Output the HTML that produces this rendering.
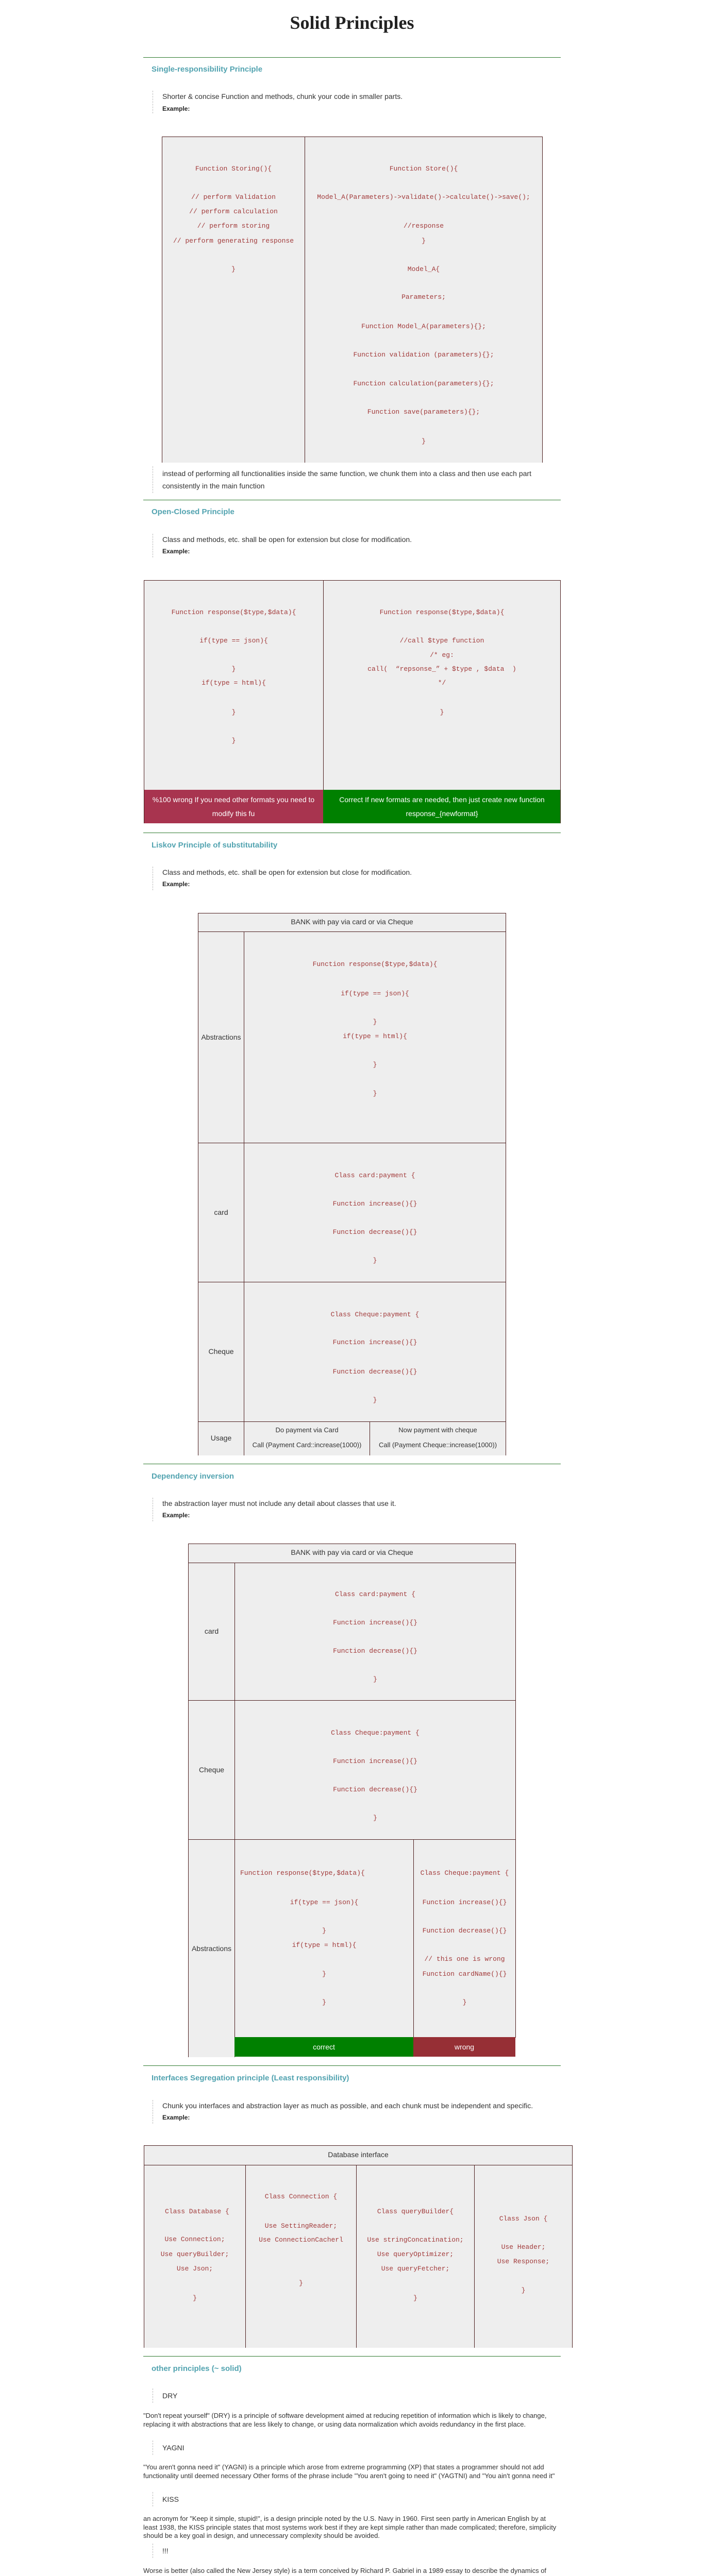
<!DOCTYPE html>
<html style="width:1366px;height:5124px;overflow:hidden;margin:0"><head><meta charset="utf-8"><style>
html{overflow:hidden}
body{margin:0;width:1366px;height:5124px;position:relative;background:#fff;font-family:"Liberation Sans",Arial,sans-serif;overflow:hidden;color:#333}
#wrap{position:absolute;left:0;top:0;width:1366px;height:5124px;overflow:hidden}
.a{position:absolute}
.g{position:absolute;left:278px;width:810px;height:0;border-top:1px solid #2e7a2e}
.h{position:absolute;left:294px;font-size:15px;font-weight:bold;color:#52a3b0;line-height:20px;white-space:nowrap}
.q{position:absolute;left:296px;border-left:1px dashed #bbb;width:1px}
.t{position:absolute;left:315px;font-size:14px;color:#333;line-height:20px;white-space:nowrap}
.ex{position:absolute;left:315px;font-size:12px;font-weight:bold;color:#222;line-height:16px}
.cell{position:absolute;background:#eee;border:1px solid #4d1f1f;box-sizing:border-box}
.k{position:absolute;font-family:"Liberation Mono",monospace;font-size:13px;color:#a23b3b;line-height:28px;height:28px;text-align:center;white-space:pre}
.s{position:absolute;font-size:14px;color:#333;line-height:20px;text-align:center;white-space:nowrap}
.w{position:absolute;font-size:14px;color:#fff;line-height:27px;text-align:center}
.p{position:absolute;left:278px;width:805px;font-size:13px;line-height:16.5px;color:#333}
</style></head><body><div id="wrap">

<div class="a" style="left:0;width:1366px;top:22px;text-align:center;font-family:'Liberation Serif',serif;font-weight:bold;font-size:36px;line-height:44px;color:#222">Solid Principles</div>

<!-- Section 1 -->
<div class="g" style="top:111px"></div>
<div class="h" style="top:125px">Single-responsibility Principle</div>
<div class="q" style="top:176px;height:44px"></div>
<div class="t" style="top:177px">Shorter &amp; concise Function and methods, chunk your code in smaller parts.</div>
<div class="ex" style="top:203px">Example:</div>
<div class="cell" style="left:314px;top:265px;width:278px;height:633px;border-bottom:none"></div>
<div class="cell" style="left:591px;top:265px;width:462px;height:633px;border-bottom:none"></div>
<div class="k" style="left:314px;width:278px;top:314px">Function Storing(){</div>
<div class="k" style="left:314px;width:278px;top:369px">// perform Validation</div>
<div class="k" style="left:314px;width:278px;top:397px">// perform calculation</div>
<div class="k" style="left:314px;width:278px;top:425px">// perform storing</div>
<div class="k" style="left:314px;width:278px;top:454px">// perform generating response</div>
<div class="k" style="left:314px;width:278px;top:509px">}</div>
<div class="k" style="left:591px;width:462px;top:314px">Function Store(){</div>
<div class="k" style="left:591px;width:462px;top:369px">Model_A(Parameters)-&gt;validate()-&gt;calculate()-&gt;save();</div>
<div class="k" style="left:591px;width:462px;top:425px">//response</div>
<div class="k" style="left:591px;width:462px;top:454px">}</div>
<div class="k" style="left:591px;width:462px;top:509px">Model_A{</div>
<div class="k" style="left:591px;width:462px;top:563px">Parameters;</div>
<div class="k" style="left:591px;width:462px;top:620px">Function Model_A(parameters){};</div>
<div class="k" style="left:591px;width:462px;top:675px">Function validation (parameters){};</div>
<div class="k" style="left:591px;width:462px;top:731px">Function calculation(parameters){};</div>
<div class="k" style="left:591px;width:462px;top:786px">Function save(parameters){};</div>
<div class="k" style="left:591px;width:462px;top:843px">}</div>
<div class="q" style="top:905px;height:52px"></div>
<div class="t" style="top:907px;line-height:24px;white-space:normal;width:740px">instead of performing all functionalities inside the same function, we chunk them into a class and then use each part consistently in the main function</div>

<!-- Section 2 -->
<div class="g" style="top:970px"></div>
<div class="h" style="top:984px">Open-Closed Principle</div>
<div class="q" style="top:1036px;height:46px"></div>
<div class="t" style="top:1037px">Class and methods, etc. shall be open for extension but close for modification.</div>
<div class="ex" style="top:1062px">Example:</div>
<div class="cell" style="left:279px;top:1126px;width:349px;height:408px"></div>
<div class="cell" style="left:627px;top:1126px;width:461px;height:408px"></div>
<div class="k" style="left:279px;width:349px;top:1175px">Function response($type,$data){</div>
<div class="k" style="left:279px;width:349px;top:1230px">if(type == json){</div>
<div class="k" style="left:279px;width:349px;top:1285px">}</div>
<div class="k" style="left:279px;width:349px;top:1312px">if(type = html){</div>
<div class="k" style="left:279px;width:349px;top:1369px">}</div>
<div class="k" style="left:279px;width:349px;top:1424px">}</div>
<div class="k" style="left:627px;width:461px;top:1175px">Function response($type,$data){</div>
<div class="k" style="left:627px;width:461px;top:1230px">//call $type function</div>
<div class="k" style="left:627px;width:461px;top:1258px">/* eg:</div>
<div class="k" style="left:627px;width:461px;top:1285px">call(  “repsonse_” + $type , $data  )</div>
<div class="k" style="left:627px;width:461px;top:1312px">*/</div>
<div class="k" style="left:627px;width:461px;top:1369px">}</div>
<div class="a" style="left:279px;top:1533px;width:348px;height:65px;background:#a8344f;border-left:1px solid #4d1f1f;box-sizing:border-box"></div>
<div class="a" style="left:627px;top:1533px;width:461px;height:65px;background:#008000;border-right:1px solid #4d1f1f;box-sizing:border-box"></div>
<div class="w" style="left:279px;width:348px;top:1539px">%100 wrong If you need other formats you need to modify this fu</div>
<div class="w" style="left:627px;width:461px;top:1539px">Correct If new formats are needed, then just create new function response_{newformat}</div>

<!-- Section 3 -->
<div class="g" style="top:1616px"></div>
<div class="h" style="top:1631px">Liskov Principle of substitutability</div>
<div class="q" style="top:1682px;height:46px"></div>
<div class="t" style="top:1683px">Class and methods, etc. shall be open for extension but close for modification.</div>
<div class="ex" style="top:1708px">Example:</div>
<div class="cell" style="left:384px;top:1772px;width:598px;height:37px"></div>
<div class="s" style="left:384px;width:598px;top:1779px">BANK with pay via card or via Cheque</div>
<div class="cell" style="left:384px;top:1808px;width:90px;height:411px"></div>
<div class="cell" style="left:473px;top:1808px;width:509px;height:411px"></div>
<div class="cell" style="left:384px;top:2218px;width:90px;height:271px"></div>
<div class="cell" style="left:473px;top:2218px;width:509px;height:271px"></div>
<div class="cell" style="left:384px;top:2488px;width:90px;height:272px"></div>
<div class="cell" style="left:473px;top:2488px;width:509px;height:272px"></div>
<div class="cell" style="left:384px;top:2759px;width:90px;height:66px;border-bottom:none"></div>
<div class="cell" style="left:473px;top:2759px;width:245px;height:66px;border-bottom:none"></div>
<div class="cell" style="left:717px;top:2759px;width:265px;height:66px;border-bottom:none"></div>
<div class="s" style="left:384px;width:90px;top:2003px">Abstractions</div>
<div class="s" style="left:384px;width:90px;top:2343px">card</div>
<div class="s" style="left:384px;width:90px;top:2613px">Cheque</div>
<div class="s" style="left:384px;width:90px;top:2781px">Usage</div>
<div class="k" style="left:473px;width:509px;top:1858px">Function response($type,$data){</div>
<div class="k" style="left:473px;width:509px;top:1915px">if(type == json){</div>
<div class="k" style="left:473px;width:509px;top:1970px">}</div>
<div class="k" style="left:473px;width:509px;top:1998px">if(type = html){</div>
<div class="k" style="left:473px;width:509px;top:2053px">}</div>
<div class="k" style="left:473px;width:509px;top:2109px">}</div>
<div class="k" style="left:473px;width:509px;top:2268px">Class card:payment {</div>
<div class="k" style="left:473px;width:509px;top:2323px">Function increase(){}</div>
<div class="k" style="left:473px;width:509px;top:2378px">Function decrease(){}</div>
<div class="k" style="left:473px;width:509px;top:2433px">}</div>
<div class="k" style="left:473px;width:509px;top:2538px">Class Cheque:payment {</div>
<div class="k" style="left:473px;width:509px;top:2592px">Function increase(){}</div>
<div class="k" style="left:473px;width:509px;top:2649px">Function decrease(){}</div>
<div class="k" style="left:473px;width:509px;top:2704px">}</div>
<div class="s" style="left:473px;width:245px;top:2766px;font-size:13px">Do payment via Card</div>
<div class="s" style="left:473px;width:245px;top:2795px;font-size:13px">Call (Payment Card::increase(1000))</div>
<div class="s" style="left:717px;width:265px;top:2766px;font-size:13px">Now payment with cheque</div>
<div class="s" style="left:717px;width:265px;top:2795px;font-size:13px">Call (Payment Cheque::increase(1000))</div>

<!-- Section 4 -->
<div class="g" style="top:2841px"></div>
<div class="h" style="top:2856px">Dependency inversion</div>
<div class="q" style="top:2907px;height:46px"></div>
<div class="t" style="top:2908px">the abstraction layer must not include any detail about classes that use it.</div>
<div class="ex" style="top:2933px">Example:</div>
<div class="cell" style="left:365px;top:2996px;width:636px;height:38px"></div>
<div class="s" style="left:365px;width:636px;top:3003px">BANK with pay via card or via Cheque</div>
<div class="cell" style="left:365px;top:3033px;width:91px;height:268px"></div>
<div class="cell" style="left:455px;top:3033px;width:546px;height:268px"></div>
<div class="cell" style="left:365px;top:3300px;width:91px;height:271px"></div>
<div class="cell" style="left:455px;top:3300px;width:546px;height:271px"></div>
<div class="cell" style="left:365px;top:3570px;width:91px;height:423px;border-bottom:none"></div>
<div class="cell" style="left:455px;top:3570px;width:348px;height:385px"></div>
<div class="cell" style="left:802px;top:3570px;width:199px;height:385px"></div>
<div class="s" style="left:365px;width:91px;top:3156px">card</div>
<div class="s" style="left:365px;width:91px;top:3425px">Cheque</div>
<div class="s" style="left:365px;width:91px;top:3772px">Abstractions</div>
<div class="k" style="left:455px;width:546px;top:3081px">Class card:payment {</div>
<div class="k" style="left:455px;width:546px;top:3136px">Function increase(){}</div>
<div class="k" style="left:455px;width:546px;top:3191px">Function decrease(){}</div>
<div class="k" style="left:455px;width:546px;top:3246px">}</div>
<div class="k" style="left:455px;width:546px;top:3350px">Class Cheque:payment {</div>
<div class="k" style="left:455px;width:546px;top:3405px">Function increase(){}</div>
<div class="k" style="left:455px;width:546px;top:3460px">Function decrease(){}</div>
<div class="k" style="left:455px;width:546px;top:3515px">}</div>
<div class="k" style="left:466px;top:3622px;text-align:left">Function response($type,$data){</div>
<div class="k" style="left:455px;width:348px;top:3679px">if(type == json){</div>
<div class="k" style="left:455px;width:348px;top:3734px">}</div>
<div class="k" style="left:455px;width:348px;top:3762px">if(type = html){</div>
<div class="k" style="left:455px;width:348px;top:3818px">}</div>
<div class="k" style="left:455px;width:348px;top:3873px">}</div>
<div class="k" style="left:802px;width:199px;top:3622px">Class Cheque:payment {</div>
<div class="k" style="left:802px;width:199px;top:3679px">Function increase(){}</div>
<div class="k" style="left:802px;width:199px;top:3734px">Function decrease(){}</div>
<div class="k" style="left:802px;width:199px;top:3789px">// this one is wrong</div>
<div class="k" style="left:802px;width:199px;top:3818px">Function cardName(){}</div>
<div class="k" style="left:802px;width:199px;top:3873px">}</div>
<div class="a" style="left:455px;top:3954px;width:347px;height:38px;background:#008000"></div>
<div class="a" style="left:802px;top:3954px;width:198px;height:38px;background:#962f35"></div>
<div class="w" style="left:455px;width:347px;top:3960px">correct</div>
<div class="w" style="left:802px;width:198px;top:3960px">wrong</div>

<!-- Section 5 -->
<div class="g" style="top:4009px"></div>
<div class="h" style="top:4024px">Interfaces Segregation principle (Least responsibility)</div>
<div class="q" style="top:4076px;height:46px"></div>
<div class="t" style="top:4077px">Chunk you interfaces and abstraction layer as much as possible, and each chunk must be independent and specific.</div>
<div class="ex" style="top:4102px">Example:</div>
<div class="cell" style="left:279px;top:4164px;width:832px;height:39px"></div>
<div class="s" style="left:279px;width:832px;top:4172px">Database interface</div>
<div class="cell" style="left:279px;top:4202px;width:198px;height:355px;border-bottom:none"></div>
<div class="cell" style="left:476px;top:4202px;width:216px;height:355px;border-bottom:none"></div>
<div class="cell" style="left:691px;top:4202px;width:230px;height:355px;border-bottom:none"></div>
<div class="cell" style="left:920px;top:4202px;width:191px;height:355px;border-bottom:none"></div>
<div class="k" style="left:279px;width:198px;top:4279px;text-align:left;padding-left:41px">Class Database {</div>
<div class="k" style="left:279px;width:198px;top:4333px">Use Connection;</div>
<div class="k" style="left:279px;width:198px;top:4362px">Use queryBuilder;</div>
<div class="k" style="left:279px;width:198px;top:4390px">Use Json;</div>
<div class="k" style="left:279px;width:198px;top:4447px">}</div>
<div class="k" style="left:476px;width:216px;top:4250px">Class Connection {</div>
<div class="k" style="left:476px;width:216px;top:4307px">Use SettingReader;</div>
<div class="k" style="left:476px;width:216px;top:4334px">Use ConnectionCacherl</div>
<div class="k" style="left:476px;width:216px;top:4418px">}</div>
<div class="k" style="left:691px;width:230px;top:4279px">Class queryBuilder{</div>
<div class="k" style="left:691px;width:230px;top:4334px">Use stringConcatination;</div>
<div class="k" style="left:691px;width:230px;top:4362px">Use queryOptimizer;</div>
<div class="k" style="left:691px;width:230px;top:4390px">Use queryFetcher;</div>
<div class="k" style="left:691px;width:230px;top:4447px">}</div>
<div class="k" style="left:920px;width:191px;top:4293px">Class Json {</div>
<div class="k" style="left:920px;width:191px;top:4348px">Use Header;</div>
<div class="k" style="left:920px;width:191px;top:4376px">Use Response;</div>
<div class="k" style="left:920px;width:191px;top:4432px">}</div>

<!-- Section 6 -->
<div class="g" style="top:4573px"></div>
<div class="h" style="top:4588px">other principles (~ solid)</div>
<div class="q" style="top:4636px;height:28px"></div>
<div class="t" style="top:4640px">DRY</div>
<div class="p" style="top:4681px">"Don't repeat yourself" (DRY) is a principle of software development aimed at reducing repetition of information which is likely to change, replacing it with abstractions that are less likely to change, or using data normalization which avoids redundancy in the first place.</div>
<div class="q" style="top:4737px;height:28px"></div>
<div class="t" style="top:4741px">YAGNI</div>
<div class="p" style="top:4781px">"You aren't gonna need it" (YAGNI) is a principle which arose from extreme programming (XP) that states a programmer should not add functionality until deemed necessary Other forms of the phrase include "You aren't going to need it" (YAGTNI) and "You ain't gonna need it"</div>
<div class="q" style="top:4837px;height:28px"></div>
<div class="t" style="top:4841px">KISS</div>
<div class="p" style="top:4881px">an acronym for "Keep it simple, stupid!", is a design principle noted by the U.S. Navy in 1960. First seen partly in American English by at least 1938, the KISS principle states that most systems work best if they are kept simple rather than made complicated; therefore, simplicity should be a key goal in design, and unnecessary complexity should be avoided.</div>
<div class="q" style="top:4937px;height:28px"></div>
<div class="t" style="top:4941px">!!!</div>
<div class="p" style="top:4982px">Worse is better (also called the New Jersey style) is a term conceived by Richard P. Gabriel in a 1989 essay to describe the dynamics of software acceptance. It refers to the argument that software quality does not necessarily increase with functionality: that there is a point where less functionality ("worse") is a preferable option ("better") in terms of practicality and usability</div>
<div class="q" style="top:5053px;height:28px"></div>
<div class="t" style="top:5057px">!!!</div>
<div class="p" style="top:5099px;height:25px;overflow:hidden">Feature creep is the excessive ongoing expansion or addition of new features in a product,[1] especially in computer software, video games and consumer and business electronics. These extra features go beyond the basic function of the product and</div>

</div></body></html>
